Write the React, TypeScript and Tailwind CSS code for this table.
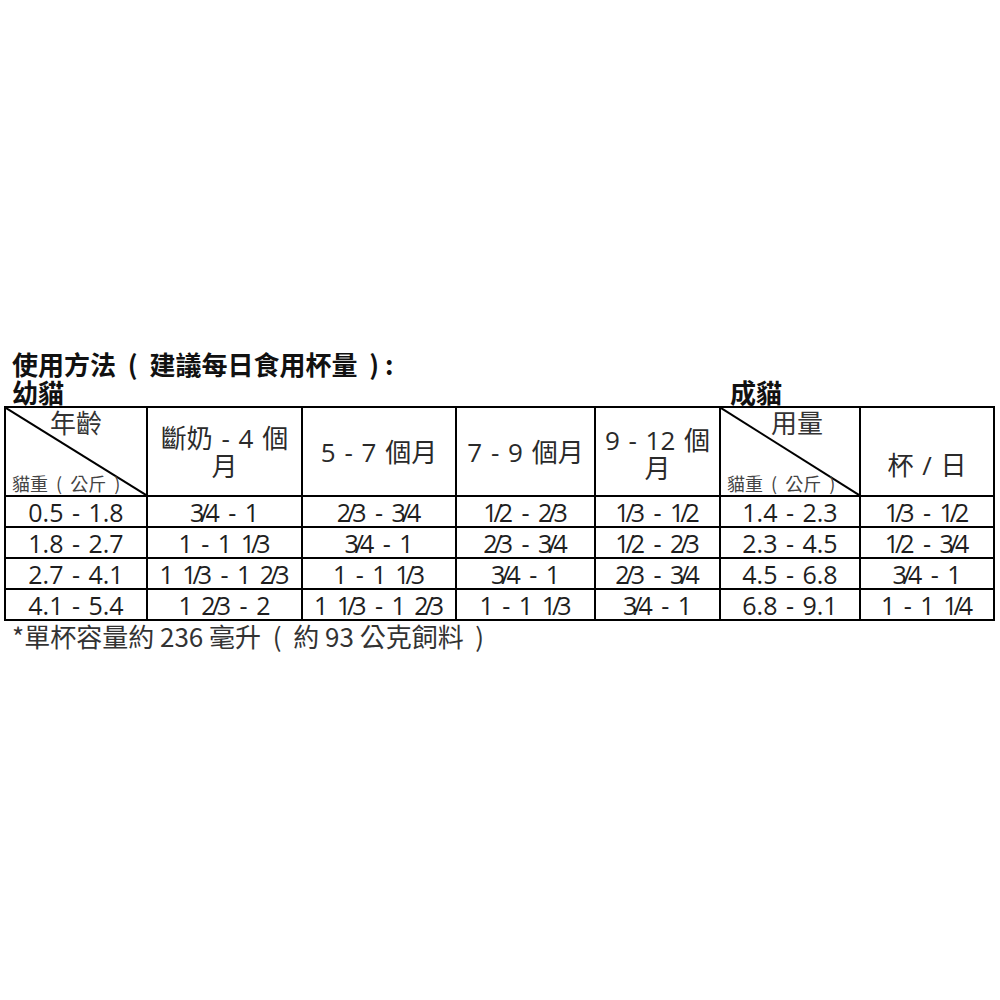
import React from 'react'

const cjk = { fontFamily: '"Noto Sans CJK TC", "Open Sans", sans-serif' }
const latin = { fontFamily: '"Open Sans", "Noto Sans CJK TC", sans-serif' }

const kitten = [
  ['0.5 - 1.8', '3/4 - 1', '2/3 - 3/4', '1/2 - 2/3', '1/3 - 1/2'],
  ['1.8 - 2.7', '1 - 1 1/3', '3/4 - 1', '2/3 - 3/4', '1/2 - 2/3'],
  ['2.7 - 4.1', '1 1/3 - 1 2/3', '1 - 1 1/3', '3/4 - 1', '2/3 - 3/4'],
  ['4.1 - 5.4', '1 2/3 - 2', '1 1/3 - 1 2/3', '1 - 1 1/3', '3/4 - 1'],
]
const adult = [
  ['1.4 - 2.3', '1/3 - 1/2'],
  ['2.3 - 4.5', '1/2 - 3/4'],
  ['4.5 - 6.8', '3/4 - 1'],
  ['6.8 - 9.1', '1 - 1 1/4'],
]

// "3/4" is drawn tight, the slash running into both digits
function Amount({ text }: { text: string }) {
  const parts = text.split(/(\d\/\d)/)
  return (
    <>
      {parts.map((p, i) =>
        /^\d\/\d$/.test(p) ? (
          <span key={i} className="mr-[4px] tracking-[-4px]">{p}</span>
        ) : (
          <span key={i} className="whitespace-pre">{p}</span>
        ),
      )}
    </>
  )
}

function Diagonal({ top, topClass }: { top: string; topClass: string }) {
  return (
    <td className="relative border-2 border-black p-0 align-top" style={cjk}>
      <svg className="absolute inset-0 h-full w-full" preserveAspectRatio="none" viewBox="0 0 100 100">
        <line x1="0" y1="0" x2="100" y2="100" stroke="black" strokeWidth="2" vectorEffect="non-scaling-stroke" />
      </svg>
      <div className={`text-[26px] leading-[28px] text-[#333] ${topClass}`}>{top}</div>
      <div className="absolute bottom-[1px] left-[6px] whitespace-pre text-[18px] leading-[22px] text-[#444]">貓重  (  公斤  )</div>
    </td>
  )
}

export default function App() {
  const cell = 'border-2 border-black p-0 text-center text-[25px] leading-[28px] text-[#1e1e1e] [word-spacing:2px]'
  const head = 'border-2 border-black p-0 text-center text-[26px] leading-[28px] text-[#2a2a2a] font-normal [word-spacing:2px]'
  return (
    <div className="min-h-screen w-[1000px] bg-white pt-[350px]" style={cjk}>
      <div className="pl-[12px] text-[26px] font-bold leading-[28px] text-[#111] whitespace-pre">使用方法  (  建議每日食用杯量  ) :</div>
      <div className="flex pl-[12px] text-[26px] font-bold leading-[28px] text-[#111]">
        <span className="w-[718px]">幼貓</span>
        <span>成貓</span>
      </div>
      <table className="ml-[4px] table-fixed border-collapse" style={latin}>
        <colgroup>
          <col className="w-[142px]" />
          <col className="w-[155px]" />
          <col className="w-[154px]" />
          <col className="w-[139px]" />
          <col className="w-[125px]" />
          <col className="w-[140px]" />
          <col className="w-[134px]" />
        </colgroup>
        <thead>
          <tr className="h-[89px]">
            <Diagonal top="年齡" topClass="pl-[44px]" />
            <th className={head}>
              斷奶 - 4 個<br />月
            </th>
            <th className={`${head} whitespace-pre`}>5 - 7 個月</th>
            <th className={`${head} whitespace-pre`}>7 - 9 個月</th>
            <th className={`${head} pt-[4px]`}>
              9 - 12 個<br />月
            </th>
            <Diagonal top="用量" topClass="pl-[50px]" />
            <th className={`${head} whitespace-pre pt-[26px]`}>杯 / 日</th>
          </tr>
        </thead>
        <tbody>
          {kitten.map((row, r) => (
            <tr key={r} className="h-[31px]">
              {row.map((c, i) => (
                <td key={i} className={cell}>
                  <Amount text={c} />
                </td>
              ))}
              {adult[r].map((c, i) => (
                <td key={'a' + i} className={cell}>
                  <Amount text={c} />
                </td>
              ))}
            </tr>
          ))}
        </tbody>
      </table>
      <div className="pl-[12px] text-[26px] leading-[30px] text-[#333] whitespace-pre">*單杯容量約 236 毫升  (  約 93 公克飼料  )</div>
    </div>
  )
}
